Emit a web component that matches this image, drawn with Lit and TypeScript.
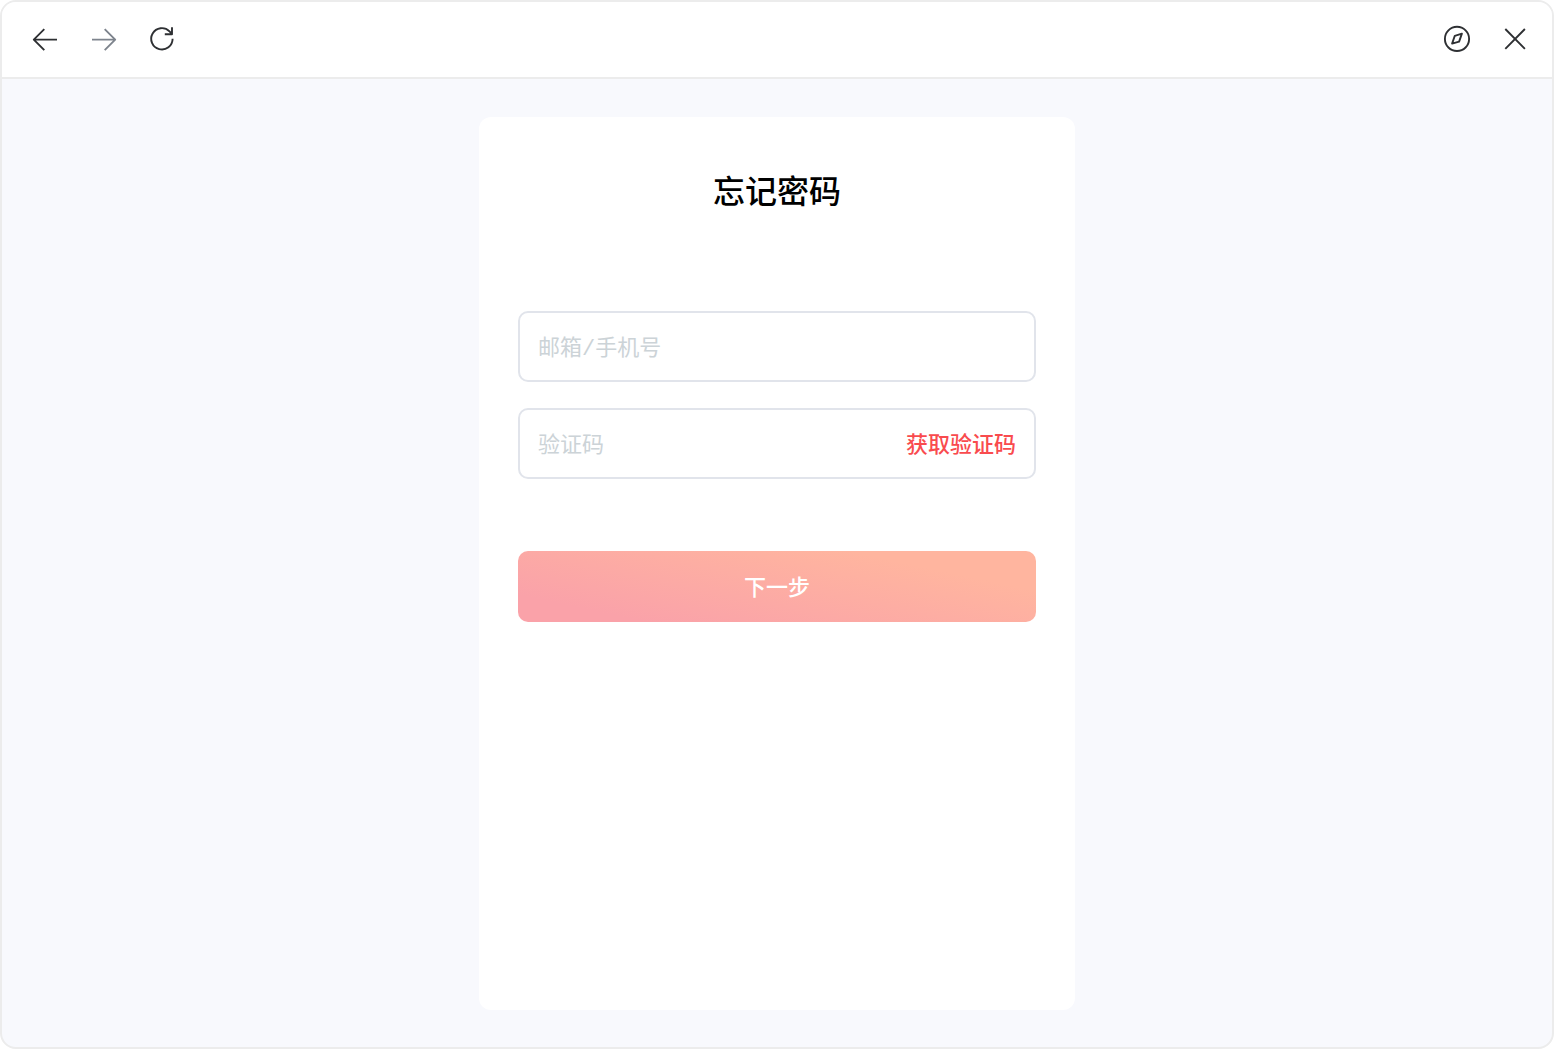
import { LitElement, html, css, svg } from "lit";
import { customElement, property, state } from "lit/decorators.js";

const icons: Record<string, unknown> = {
  back: svg`<path d="M26 14.6H2.8M13.3 4.2L2.8 14.6l10.5 10.6" />`,
  forward: svg`<path d="M3 14.6h23.2M15.7 4.2l10.5 10.4-10.5 10.6" />`,
  reload: svg`<path d="M25.6 13.8A10.7 10.7 0 1 1 22.5 6.3l2.4 2.5M25 2.3v6.9h-7.2" />`,
  compass: svg`<circle cx="14" cy="13.9" r="12.1" /><path d="M18.9 8.6l-7.1 2.2-2.7 7.8 7-2z" />`,
  close: svg`<path d="M4.3 4l19.6 19.9M23.9 4L4.3 23.9" />`,
};

@customElement("tool-button")
class ToolButton extends LitElement {
  @property() icon = "";
  @property() label = "";
  @property({ type: Boolean }) muted = false;

  static styles = css`
    :host {
      display: block;
      color: #2e3033;
    }
    :host([muted]) {
      color: #7e848d;
    }
    .button {
      display: block;
      padding: 0;
      border: 0;
      background: none;
      color: inherit;
      cursor: pointer;
    }
    .glyph {
      display: block;
      width: 28px;
      height: 28px;
      fill: none;
      stroke: currentColor;
      stroke-width: 1.9;
      stroke-linejoin: round;
    }
  `;

  render() {
    return html`<button class="button" type="button" aria-label=${this.label} ?disabled=${this.muted}>
      <svg class="glyph" viewBox="0 0 28 28" aria-hidden="true">${icons[this.icon]}</svg>
    </button>`;
  }
}

@customElement("app-root")
class AppRoot extends LitElement {
  @state() account = "";
  @state() code = "";

  static styles = css`
    * {
      box-sizing: border-box;
    }
    :host {
      display: block;
      background: #fff;
      font-family: "Noto Sans CJK SC", "Noto Sans", sans-serif;
      font-size: 22px;
      line-height: 32px;
    }
    .window {
      display: flex;
      flex-direction: column;
      min-height: 100vh;
      border: 2px solid #ececec;
      border-radius: 16px;
      background: #f8f9fd;
      overflow: hidden;
    }
    .toolbar {
      display: flex;
      justify-content: space-between;
      padding: 23px 23px 24px 29px;
      border-bottom: 2px solid #ececec;
      background: #fff;
    }
    .group {
      display: flex;
      gap: 30px;
    }
    .content {
      display: flex;
      flex: 1;
      justify-content: center;
      padding: 38px 24px 37px;
    }
    .card {
      width: 100%;
      max-width: 596px;
      padding: 48px 39px;
      border-radius: 12px;
      background: #fff;
    }
    .title {
      margin: 0 0 98px;
      color: #000;
      font-size: 32px;
      font-weight: 500;
      line-height: 48px;
      text-align: center;
    }
    .form {
      display: flex;
      flex-direction: column;
      gap: 26px;
    }
    .field {
      display: flex;
      align-items: center;
      height: 71px;
      padding: 0 18px 4px;
      border: 2px solid #e1e4eb;
      border-radius: 10px;
    }
    .input {
      flex: 1;
      min-width: 0;
      height: 100%;
      padding: 0;
      border: 0;
      outline: 0;
      background: none;
      color: #222;
      font: inherit;
    }
    .input::placeholder {
      color: #ccd3d7;
      font-family: "Liberation Mono", "Noto Sans CJK SC", sans-serif;
      font-weight: 400;
      opacity: 1;
    }
    .send {
      padding: 0;
      border: 0;
      background: none;
      color: #f94b4e;
      font: inherit;
      font-weight: 500;
      cursor: pointer;
    }
    .submit {
      height: 71px;
      margin-top: 46px;
      padding: 0 0 4px;
      border: 0;
      border-radius: 10px;
      background: linear-gradient(12deg, #faa2a9 15%, #ffb59f 78%);
      color: #fff;
      font: inherit;
      font-weight: 500;
      cursor: pointer;
    }
  `;

  render() {
    return html`
      <div class="window">
        <header class="toolbar">
          <nav class="group">
            <tool-button icon="back" label="后退"></tool-button>
            <tool-button icon="forward" label="前进" muted></tool-button>
            <tool-button icon="reload" label="刷新"></tool-button>
          </nav>
          <div class="group">
            <tool-button icon="compass" label="在浏览器中打开"></tool-button>
            <tool-button icon="close" label="关闭"></tool-button>
          </div>
        </header>
        <main class="content">
          <section class="card">
            <h1 class="title">忘记密码</h1>
            <form class="form" @submit=${(e: Event) => e.preventDefault()}>
              <label class="field">
                <input class="input" type="text" aria-label="邮箱/手机号" placeholder="邮箱/手机号"
                  .value=${this.account}
                  @input=${(e: Event) => (this.account = (e.target as HTMLInputElement).value)} />
              </label>
              <div class="field">
                <input class="input" type="text" aria-label="验证码" placeholder="验证码"
                  .value=${this.code}
                  @input=${(e: Event) => (this.code = (e.target as HTMLInputElement).value)} />
                <button class="send" type="button">获取验证码</button>
              </div>
              <button class="submit" type="submit">下一步</button>
            </form>
          </section>
        </main>
      </div>
    `;
  }
}
